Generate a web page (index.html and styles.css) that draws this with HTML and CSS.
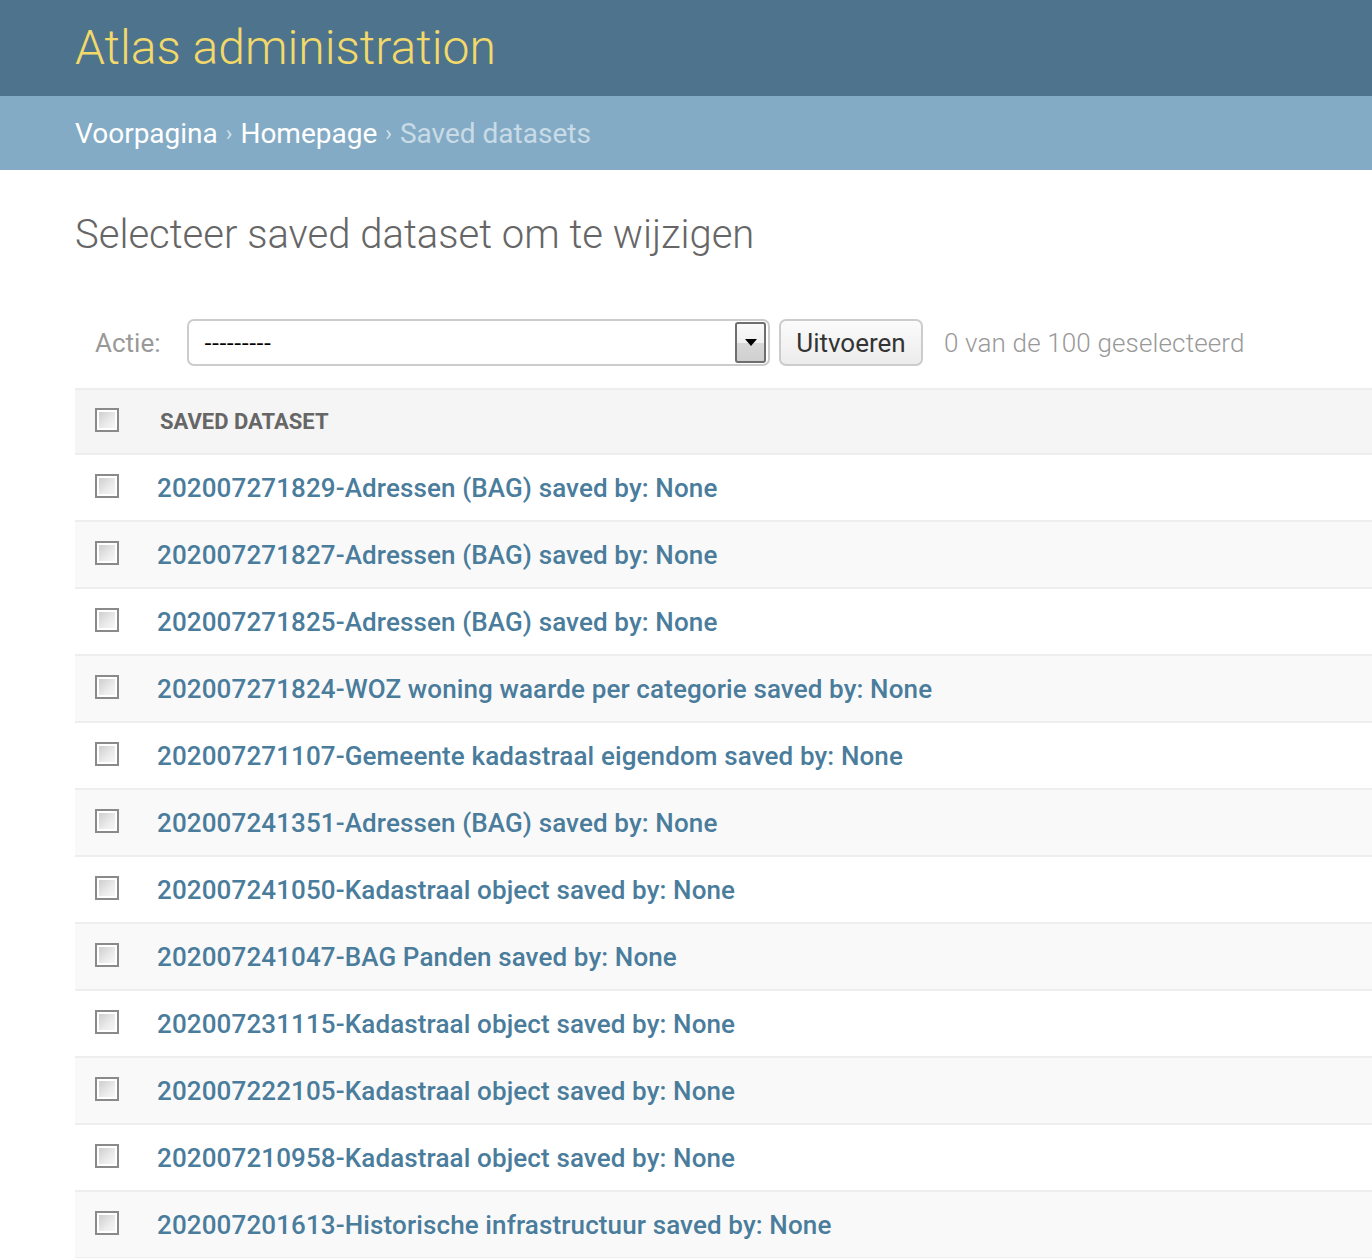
FILE: index.html
```html
<!DOCTYPE html>
<html lang="nl">
<head>
<meta charset="utf-8">
<title>Selecteer saved dataset om te wijzigen</title>
<link rel="stylesheet" href="styles.css">
</head>
<body>
<header class="header">
  <div class="branding">Atlas administration</div>
</header>
<nav class="breadcrumbs">
  <a href="#">Voorpagina</a><span class="sep">›</span><a href="#">Homepage</a><span class="sep">›</span><span class="current">Saved datasets</span>
</nav>
<main class="content">
  <h1 class="title">Selecteer saved dataset om te wijzigen</h1>
  <div class="actions">
    <span class="actions-label">Actie:</span>
    <div class="select">
      <span class="select-value">---------</span>
      <span class="select-arrow"><span class="tri"></span></span>
    </div>
    <button class="go" type="button">Uitvoeren</button>
    <span class="counter">0 van de 100 geselecteerd</span>
  </div>
  <div class="table">
    <div class="row head">
      <span class="cb"></span>
      <span class="head-label">Saved dataset</span>
    </div>
    <div class="row"><span class="cb"></span><a href="#" class="link">202007271829-Adressen (BAG) saved by: None</a></div>
    <div class="row alt"><span class="cb"></span><a href="#" class="link">202007271827-Adressen (BAG) saved by: None</a></div>
    <div class="row"><span class="cb"></span><a href="#" class="link">202007271825-Adressen (BAG) saved by: None</a></div>
    <div class="row alt"><span class="cb"></span><a href="#" class="link">202007271824-WOZ woning waarde per categorie saved by: None</a></div>
    <div class="row"><span class="cb"></span><a href="#" class="link">202007271107-Gemeente kadastraal eigendom saved by: None</a></div>
    <div class="row alt"><span class="cb"></span><a href="#" class="link">202007241351-Adressen (BAG) saved by: None</a></div>
    <div class="row"><span class="cb"></span><a href="#" class="link">202007241050-Kadastraal object saved by: None</a></div>
    <div class="row alt"><span class="cb"></span><a href="#" class="link">202007241047-BAG Panden saved by: None</a></div>
    <div class="row"><span class="cb"></span><a href="#" class="link">202007231115-Kadastraal object saved by: None</a></div>
    <div class="row alt"><span class="cb"></span><a href="#" class="link">202007222105-Kadastraal object saved by: None</a></div>
    <div class="row"><span class="cb"></span><a href="#" class="link">202007210958-Kadastraal object saved by: None</a></div>
    <div class="row alt"><span class="cb"></span><a href="#" class="link">202007201613-Historische infrastructuur saved by: None</a></div>
  </div>
</main>
</body>
</html>
```

FILE: styles.css
```css
html, body {
  margin: 0;
  padding: 0;
  background: #fff;
  font-family: Roboto, "Liberation Sans", sans-serif;
  overflow: hidden;
}

.header {
  height: 96px;
  background: #4d748c;
  padding: 0 75px;
  display: flex;
  align-items: center;
}

.branding {
  color: #f2d96a;
  font-size: 48px;
  font-weight: 300;
  line-height: 1;
}

.breadcrumbs {
  height: 74px;
  background: #84abc5;
  padding: 0 75px;
  display: flex;
  align-items: center;
  font-size: 28px;
  font-weight: 400;
}

.breadcrumbs a {
  color: #fff;
  text-decoration: none;
}

.breadcrumbs .sep {
  color: #d4e3ec;
  font-size: 22px;
  margin: 0 8px;
}

.breadcrumbs .current {
  color: #c8dbe7;
}

.content {
  padding: 0 0 0 75px;
}

.title {
  margin: 0;
  padding-top: 45px;
  height: 108px;
  box-sizing: border-box;
  font-size: 40px;
  font-weight: 300;
  color: #666;
  line-height: 40px;
}

.actions {
  height: 110px;
  display: flex;
  align-items: center;
  padding-left: 20px;
  font-size: 26px;
  box-sizing: border-box;
  padding-top: 19px;
}

.actions-label {
  color: #999;
  width: 92px;
}

.select {
  width: 583px;
  height: 47px;
  box-sizing: border-box;
  border: 2px solid #ccc;
  border-radius: 7px;
  display: flex;
  align-items: center;
  justify-content: space-between;
  padding: 0 2px 0 15px;
  background: #fff;
}

.select-value {
  color: #000;
  font-family: "DejaVu Sans", sans-serif;
  font-size: 22px;
  letter-spacing: -0.5px;
}

.select-arrow {
  width: 31px;
  height: 41px;
  box-sizing: border-box;
  border: 2px solid #6e6e6e;
  border-radius: 3px;
  background: linear-gradient(#fafafa 0%, #f0f0f0 50%, #d8d8d8 52%, #cfcfcf 100%);
  display: flex;
  align-items: center;
  justify-content: center;
}

.tri {
  width: 0;
  height: 0;
  border-left: 6px solid transparent;
  border-right: 6px solid transparent;
  border-top: 7px solid #000;
}

.go {
  margin-left: 9px;
  height: 47px;
  width: 144px;
  border: 2px solid #ccc;
  border-radius: 7px;
  background: linear-gradient(#fbfbfb, #ececec);
  font-family: Roboto, "Liberation Sans", sans-serif;
  font-size: 26px;
  color: #333;
  padding: 0;
}

.counter {
  margin-left: 21px;
  color: #999;
  font-weight: 300;
  letter-spacing: 0.15px;
}

.table {
  width: 1400px;
  border-top: 2px solid #eee;
}

.row {
  height: 65px;
  border-bottom: 2px solid #eee;
  display: flex;
  align-items: center;
  padding-left: 20px;
  background: #fff;
}

.row.alt {
  background: #f9f9f9;
}

.row.head {
  height: 63px;
  background: #f5f5f5;
}

.cb {
  width: 24px;
  height: 24px;
  box-sizing: border-box;
  border: 2px solid #8a8a8a;
  box-shadow: inset 0 0 0 2px #fff;
  background: linear-gradient(135deg, #c8c8c8, #ececec 60%, #fafafa);
  flex: none;
  margin-top: -4px;
}

.head-label {
  margin-left: 41px;
  font-size: 22px;
  font-weight: 700;
  color: #666;
  text-transform: uppercase;
}

.link {
  margin-left: 38px;
  font-size: 26px;
  font-weight: 500;
  color: #4a7c9c;
  text-decoration: none;
  letter-spacing: 0.12px;
}
```
